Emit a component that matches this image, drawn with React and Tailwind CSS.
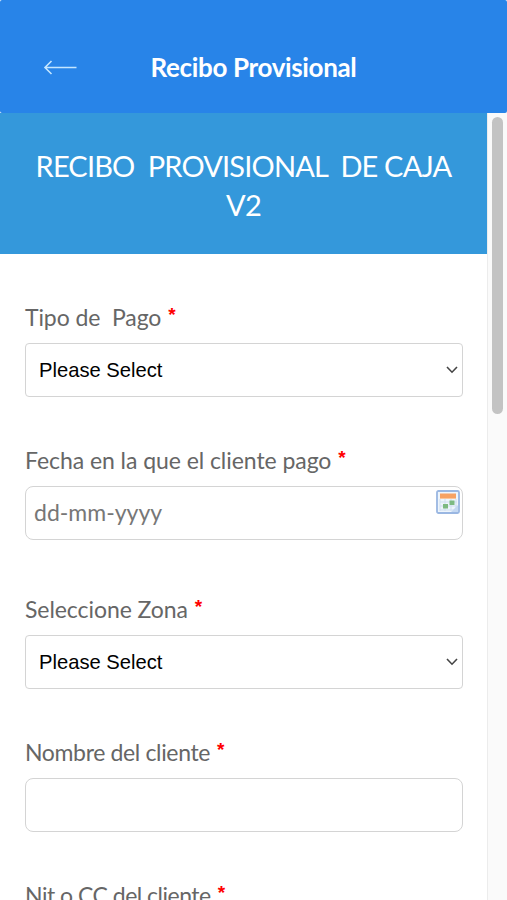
const fields = [
  { label: "Tipo de  Pago", type: "select", tracking: "tracking-[-0.08px]", space: "mb-[47px]" },
  { label: "Fecha en la que el cliente pago", type: "date", tracking: "tracking-[-0.06px]", space: "mb-[53px]" },
  { label: "Seleccione Zona", type: "select", tracking: "tracking-[-0.07px]", space: "mb-[47px]" },
  { label: "Nombre del cliente", type: "text", tracking: "tracking-[-0.35px]", space: "mb-[47px]" },
  { label: "Nit o CC del cliente", type: "text", tracking: "tracking-[-0.5px]", space: "" },
];

function BackArrow() {
  return (
    <svg width="34" height="16" viewBox="0 0 34 16" fill="none" stroke="#c4e6ff" strokeWidth="1.6">
      <path d="M8.5 1 2 7.5l6.5 6.5M2 7.5h31.5" />
    </svg>
  );
}

function CalendarIcon() {
  return (
    <svg width="24" height="24" viewBox="0 0 24 24">
      <rect x="1" y="1" width="22" height="22" rx="1.5" fill="#eef5fc" stroke="#9ab7e2" strokeWidth="1.8" />
      <path d="M4 9v12M9 9v12M15 9v12M20 9v12M4 12h17M4 16h17M4 20h17" stroke="#cfdff0" strokeWidth="1" />
      <rect x="4" y="3.5" width="16" height="5" fill="#f7a263" />
      <path d="M4 8.5h16" stroke="#fbc79d" />
      <rect x="13.5" y="10.5" width="5" height="4.5" fill="#7dba82" />
      <rect x="7" y="14" width="5" height="4.5" fill="#7dba82" />
      <path d="M15 22l7-7v7z" fill="#c4d8f2" />
    </svg>
  );
}

function Control({ type }) {
  if (type === "select") {
    return (
      <div className="flex h-[54px] items-center justify-between rounded-[4px] border-[1.5px] border-[#d4d4d4] bg-white pr-1 pl-[13px]">
        <span className="font-['Liberation_Sans',sans-serif] text-[20.2px] leading-6 text-black">
          Please Select
        </span>
        <svg width="12" height="8" viewBox="0 0 12 8" fill="none" stroke="#444" strokeWidth="1.6">
          <path d="m1 1 5 5.2L11 1" />
        </svg>
      </div>
    );
  }

  return (
    <div className="flex h-[54px] items-center justify-between rounded-[8px] border-[1.5px] border-[#d4d4d4] bg-white pr-[2px] pl-2">
      {type === "date" && (
        <>
          <span className="pb-0.5 text-[23px] leading-7 text-[#777]">dd-mm-yyyy</span>
          <span className="mt-[3px] self-start">
            <CalendarIcon />
          </span>
        </>
      )}
    </div>
  );
}

export default function App() {
  return (
    <div className="flex h-[900px] w-[507px] flex-col overflow-hidden bg-white font-[Lato,sans-serif]">
      <header className="grid h-[113px] shrink-0 grid-cols-[107px_1fr_107px] items-center rounded-[2px] bg-[#2884e8] pt-5">
        <span className="pt-0.5 pl-[43px]">
          <BackArrow />
        </span>
        <h1 className="text-center text-[26px] leading-8 font-bold tracking-[-0.35px] text-white">
          Recibo Provisional
        </h1>
      </header>

      <div className="flex min-h-0 flex-1">
        <main className="w-[487px] shrink-0 overflow-hidden">
          <div className="h-[141px] bg-[#3498db] pt-[33px] text-center text-[29px] leading-[39px] tracking-[-0.83px] whitespace-pre text-white">
            <p>RECIBO  PROVISIONAL  DE CAJA</p>
            <p>V2</p>
          </div>

          <form className="pt-[47px] pr-6 pl-[25px]">
            {fields.map((field) => (
              <div key={field.label} className={field.space}>
                <div className="flex h-[42px] items-start pt-0.5 text-[23px] leading-7 whitespace-pre text-[#666]">
                  <span className={field.tracking}>{field.label}</span>
                  <span className="ml-[7px] font-['Liberation_Sans',sans-serif] text-[19px] leading-[23px] font-bold text-[#f00]">
                    *
                  </span>
                </div>
                <Control type={field.type} />
              </div>
            ))}
          </form>
        </main>

        {/* Scrollbar */}
        <div className="flex flex-1 justify-center border-l border-[#ececec] bg-[#fafafa] pt-1">
          <div className="h-[297px] w-[11px] rounded-full bg-[#c3c3c3]" />
        </div>
      </div>
    </div>
  );
}
